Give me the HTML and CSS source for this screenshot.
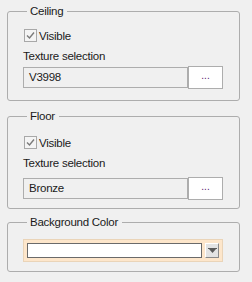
FILE: index.html
```html
<!DOCTYPE html>
<html>
	<head>
		<meta charset="UTF-8">
		<title>Texture settings</title>
		<link rel="stylesheet" href="styles.css">
	</head>
	<body>
		<div class="panel">
			<fieldset class="group ceiling">
				<legend>Ceiling</legend>
				<label class="check">
					<span class="box"><svg width="11" height="11" viewBox="0 0 11 11"><path d="M2 5.5 L4.5 8 L9 2.5" fill="none" stroke="#7a7a7a" stroke-width="1.4"/></svg></span>
					Visible
				</label>
				<div class="caption">Texture selection</div>
				<div class="picker">
					<div class="field">V3998</div>
					<button class="browse">...</button>
				</div>
			</fieldset>
			<fieldset class="group floor">
				<legend>Floor</legend>
				<label class="check">
					<span class="box"><svg width="11" height="11" viewBox="0 0 11 11"><path d="M2 5.5 L4.5 8 L9 2.5" fill="none" stroke="#7a7a7a" stroke-width="1.4"/></svg></span>
					Visible
				</label>
				<div class="caption">Texture selection</div>
				<div class="picker">
					<div class="field">Bronze</div>
					<button class="browse">...</button>
				</div>
			</fieldset>
			<fieldset class="group color">
				<legend>Background Color</legend>
				<div class="combo">
					<div class="swatch"></div>
					<span class="drop"><svg width="9" height="6" viewBox="0 0 9 6"><path d="M0 0 H9 V1 H0 Z M1 1 H8 L4.5 5 Z" fill="#5a5a5a"/></svg></span>
				</div>
			</fieldset>
		</div>
	</body>
</html>
```

FILE: styles.css
```css
*{
	box-sizing: border-box;
}
body{
	margin: 0;
	background: #f0f0f0;
	font-family: "Liberation Sans", Arial, sans-serif;
	font-size: 11.5px;
	letter-spacing: -0.25px;
	color: #1a1a1a;
}
.panel{
	padding: 4px 0 0 7px;
}
.group{
	width: 233px;
	margin: 0 0 8px;
	padding: 10px 15px 11px;
	border: 1px solid #adadad;
	border-radius: 3px;
}
.group legend{
	margin-left: 4px;
	padding: 0 4px 0 3px;
	line-height: 14px;
}
.check{
	display: flex;
	align-items: center;
	gap: 2px;
	height: 15px;
	margin-left: 1px;
}
.box{
	width: 13px;
	height: 13px;
	border: 1px solid #a8a8a8;
	background: #f4f4f4;
	display: flex;
	align-items: center;
	justify-content: center;
}
.caption{
	margin-top: 6px;
	line-height: 15px;
}
.picker{
	display: flex;
	align-items: center;
	margin-top: 2px;
}
.field{
	width: 165px;
	height: 21px;
	border: 1px solid #adadad;
	padding: 2px 5px;
	line-height: 15px;
}
.browse{
	width: 35px;
	height: 23px;
	border: 1px solid #adadad;
	background: #fff;
	font: inherit;
	color: #5a1a6a;
	padding: 0 0 4px;
	line-height: 12px;
	font-size: 10px;
}
.floor{
	margin-bottom: 6px;
	padding-top: 12px;
	padding-bottom: 8px;
}
.floor .picker{
	margin-top: 6px;
}
.color{
	padding-top: 10px;
	padding-bottom: 9px;
}
.combo{
	width: 200px;
	height: 23px;
	background: #fde6cb;
	border: 1px solid #ead4b8;
	display: flex;
	align-items: center;
	padding: 0 3px;
	gap: 3px;
}
.swatch{
	width: 176px;
	height: 15px;
	background: #fff;
	border: 1px solid #6a6a6a;
}
.drop{
	width: 14px;
	height: 15px;
	background: #e3e3e3;
	border: 1px solid;
	border-color: #fff #8a8a8a #8a8a8a #fff;
	display: flex;
	align-items: center;
	justify-content: center;
}
```
